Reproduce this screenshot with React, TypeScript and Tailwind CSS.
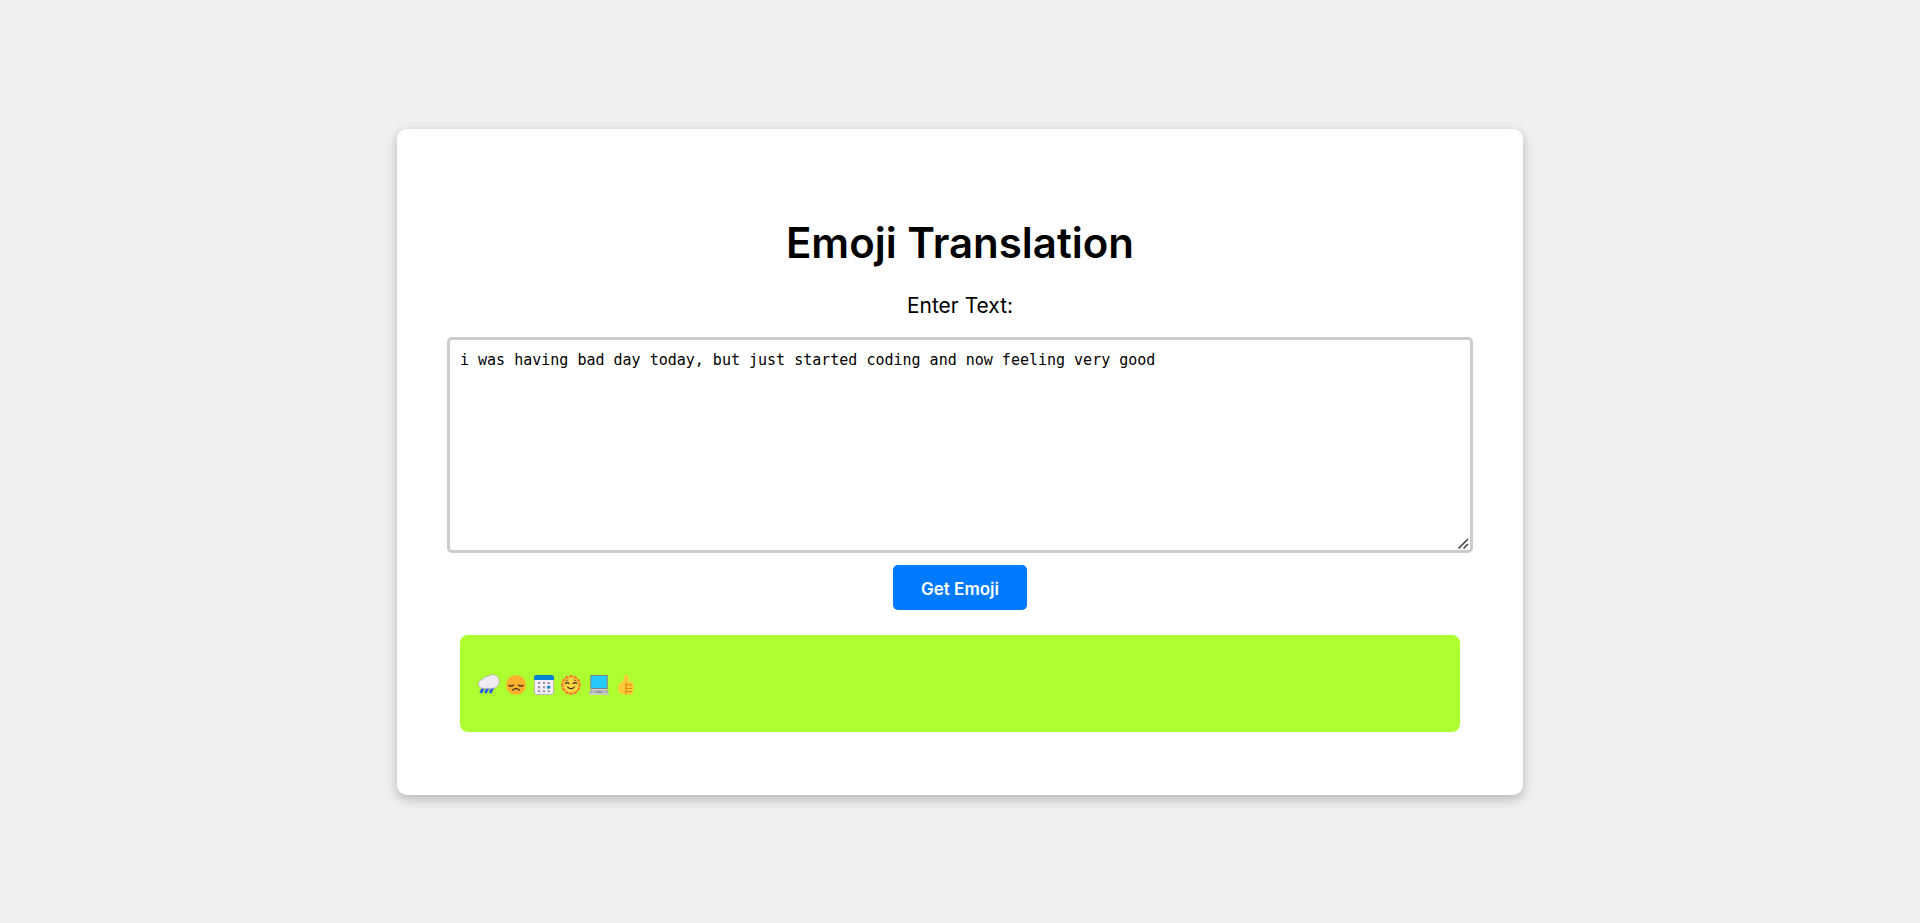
import { useState } from "react";
import type { ReactNode } from "react";

function Emoji({ label, children }: { label: string; children: ReactNode }) {
  return (
    <svg role="img" aria-label={label} viewBox="0 0 22 22" className="size-[22px]">
      {children}
    </svg>
  );
}

const petals = Array.from({ length: 12 }, (_, i) => i * 30);

function RainCloud() {
  return (
    <Emoji label="Rain cloud">
      <g stroke="#2f5bea" strokeWidth="2.8">
        <path d="M5.6 13.5 2.6 19M10.3 13.5 7.3 19M15 13.5 12 19" />
      </g>
      <path
        d="M5 14.4C2 14.4 .5 12.4 .5 10c0-2.400 1.600-4.300 4.200-4.700C5.700 3.300 7.700 2.200 10 2.600c1.200-1.300 3-2.100 5-1.900 3.700.3 6.300 2.900 6.300 6.300 0 4.200-3 7.400-7 7.400Z"
        fill="#f1ecf4"
        stroke="#b5a9bd"
        strokeWidth=".8"
      />
    </Emoji>
  );
}

function SadFace() {
  return (
    <Emoji label="Disappointed face">
      <circle cx="11" cy="11" r="10" fill="#ffb02e" />
      <g fill="none" stroke="#40291c" strokeWidth="1.2" strokeLinecap="round">
        <path d="M4 11.2c1.400 1.300 3.200 1.200 4.600-.3M18 11.2c-1.400 1.300-3.200 1.200-4.600-.3M7.600 16.2c1.800-2.200 5-2.200 6.800 0" />
      </g>
    </Emoji>
  );
}

function Calendar() {
  return (
    <Emoji label="Calendar">
      <rect x="1.4" y="1.4" width="19.2" height="19.2" rx="2.6" fill="#f3eef8" stroke="#b4acbc" strokeWidth=".9" />
      <path d="M1 6V3.6A2.6 2.6 0 0 1 3.6 1h14.8A2.6 2.6 0 0 1 21 3.6V6Z" fill="#0084ce" />
      <path
        d="M5 8h2.2v2H5zM9.9 8h2.2v2H9.9zM14.6 8h2.2v2h-2.2zM5 12.2h2.2v2H5zM9.9 12.2h2.2v2H9.9zM5 16.2h2.2v2H5zM9.9 16.2h2.2v2H9.9zM14.6 16.2h2.2v2h-2.2z"
        fill="#9b8fa5"
      />
      <path d="M14.2 11.8h3v2.8h-3z" fill="#0084ce" />
    </Emoji>
  );
}

function SunFace() {
  return (
    <Emoji label="Sun with face">
      {petals.map((angle) => (
        <circle key={angle} cx="11" cy="2.7" r="1.9" fill="#ff822d" transform={`rotate(${angle} 11 11)`} />
      ))}
      <circle cx="11" cy="11" r="8.6" fill="#ff822d" />
      <circle cx="11" cy="11" r="7.7" fill="#fcd53f" />
      <g fill="none" stroke="#40291c" strokeWidth="1.1" strokeLinecap="round">
        <path d="M5.4 9.6c1-1.3 2.6-1.3 3.6 0M13 9.6c1-1.3 2.6-1.3 3.6 0M7.6 13c1.7 2.2 5.1 2.2 6.8 0" />
        <path d="M5.8 7c.7-.7 1.4-1 2.2-1M16.2 7c-.7-.7-1.4-1-2.2-1" strokeWidth=".8" />
      </g>
    </Emoji>
  );
}

function Laptop() {
  return (
    <Emoji label="Laptop">
      <rect x="2.2" y="1" width="17.6" height="14" rx=".8" fill="#80808c" />
      <path d="M3.2 2h15.6v12H3.2z" fill="#26c9fc" />
      <path d="M3 15h16v1H3z" fill="#d0d0d6" />
      <path d="M2.8 16h16.4L21 19.2H1Z" fill="#aaa8b0" />
      <path d="M4 17h14M3.4 18.2h3.8M14.8 18.2h3.8" stroke="#d3d2d8" strokeWidth=".6" />
      <path d="M8.4 17.6h5.2l.4 1.2H8Z" fill="#8b8993" />
      <rect x="1" y="19.2" width="20" height="1.8" rx=".5" fill="#cbc8d0" />
    </Emoji>
  );
}

function ThumbsUp() {
  return (
    <Emoji label="Thumbs up">
      <path
        d="M11.3 1c1.5 0 2.3 1.2 2.3 2.8v3.6h2.5c2 0 2.8 2.1 1.7 3.3 1.5.8 1.5 2.7.3 3.5 1 1 .8 2.7-.4 3.3.6 1.6-.4 3.3-2.4 3.3H10c-4.3 0-7-2.4-7-6.2 0-3 1.2-5 3.4-6.4 1.8-1.2 2.6-2.6 2.7-5C9.2 1.8 10 1 11.3 1Z"
        fill="#ffc83d"
      />
      <path
        d="M11 8.3v11.8M11 10.9h5.6M11 14.4h5.8M11 17.6h5.4"
        fill="none"
        stroke="#d67d00"
        strokeWidth=".9"
        strokeLinecap="round"
      />
    </Emoji>
  );
}

export default function App() {
  const [text, setText] = useState(
    "i was having bad day today, but just started coding and now feeling very good",
  );

  return (
    <div className="flex min-h-screen items-center justify-center bg-[#f0f0f0] font-['Inter',sans-serif] text-black">
      <main className="flex w-full max-w-[1126px] flex-col items-center rounded-[10px] bg-white px-[50px] pt-[90px] pb-[63px] shadow-[0_4px_12px_rgba(0,0,0,0.25)]">
        <h1 className="text-center text-[42px] leading-[48px] font-semibold">Emoji Translation</h1>
        <label htmlFor="source-text" className="mt-[27px] text-[21px] leading-6">
          Enter Text:
        </label>
        <div className="relative mt-[19px] flex w-full">
          <textarea
            id="source-text"
            spellCheck={false}
            value={text}
            onChange={(event) => setText(event.target.value)}
            className="h-[216px] w-full resize-y rounded-[5px] border-3 border-[#ccc] bg-white p-[10px] font-['DejaVu_Sans_Mono',monospace] text-[15px] leading-5 text-black outline-none"
          />
          <svg
            aria-hidden="true"
            viewBox="0 0 14 14"
            className="pointer-events-none absolute right-[3px] bottom-[3px] size-[14px] rounded-br-xs bg-white"
          >
            <path d="M2.5 12.5 12 3M7.5 12.5 12 8" stroke="#444" strokeWidth="1.6" />
          </svg>
        </div>
        <button
          type="button"
          className="mt-3 w-[134px] cursor-pointer rounded-[5px] bg-[#007bff] pt-3 pb-[9px] text-[17px] leading-6 font-semibold text-white"
        >
          Get Emoji
        </button>
        <div className="mt-[25px] w-full px-[13px]">
          <div className="rounded-[8px] bg-[#adff2f] px-[18px] pt-[39px] pb-9">
            <div className="flex w-[159px] justify-between">
              <RainCloud />
              <SadFace />
              <Calendar />
              <SunFace />
              <Laptop />
              <ThumbsUp />
            </div>
          </div>
        </div>
      </main>
    </div>
  );
}
